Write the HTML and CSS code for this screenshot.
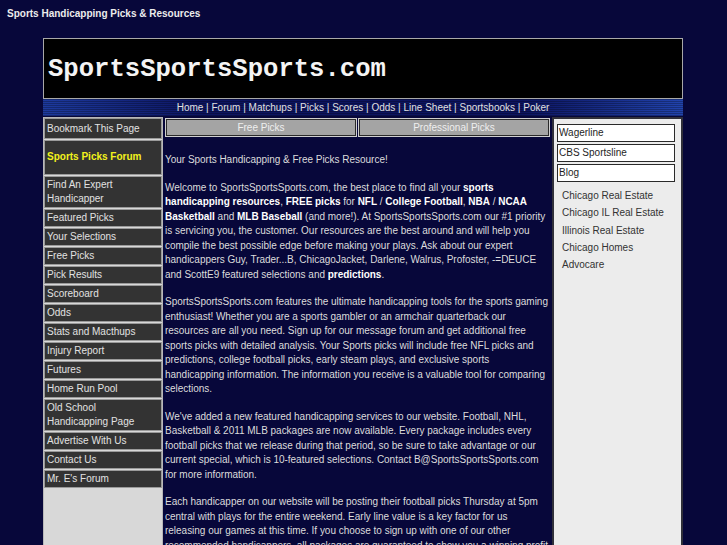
FILE: index.html
```html
<!DOCTYPE html>
<html lang="en">
<head>
<meta charset="utf-8">
<title>Sports Handicapping Picks &amp; Resources</title>
<link rel="stylesheet" href="styles.css">
</head>
<body>
<h1 class="site-tag">Sports Handicapping Picks &amp; Resources</h1>
<div class="wrap">
  <div class="masthead"><span class="logo">SportsSportsSports.com</span></div>
  <div class="topnav">
    <a href="#">Home</a> | <a href="#">Forum</a> | <a href="#">Matchups</a> | <a href="#">Picks</a> | <a href="#">Scores</a> | <a href="#">Odds</a> | <a href="#">Line Sheet</a> | <a href="#">Sportsbooks</a> | <a href="#">Poker</a>
  </div>
  <div class="cols">
    <ul class="leftnav">
      <li class="bookmark"><a href="#">Bookmark This Page</a></li>
      <li class="forum"><a href="#">Sports Picks Forum</a></li>
      <li><a href="#">Find An Expert Handicapper</a></li>
      <li><a href="#">Featured Picks</a></li>
      <li><a href="#">Your Selections</a></li>
      <li><a href="#">Free Picks</a></li>
      <li><a href="#">Pick Results</a></li>
      <li><a href="#">Scoreboard</a></li>
      <li><a href="#">Odds</a></li>
      <li><a href="#">Stats and Macthups</a></li>
      <li><a href="#">Injury Report</a></li>
      <li><a href="#">Futures</a></li>
      <li><a href="#">Home Run Pool</a></li>
      <li><a href="#">Old School Handicapping Page</a></li>
      <li><a href="#">Advertise With Us</a></li>
      <li><a href="#">Contact Us</a></li>
      <li><a href="#">Mr. E's Forum</a></li>
    </ul>
    <div class="main">
      <div class="tabs">
        <a class="tab" href="#">Free Picks</a>
        <a class="tab" href="#">Professional Picks</a>
      </div>
      <p class="lead">Your Sports Handicapping &amp; Free Picks Resource!</p>
      <p>Welcome to SportsSportsSports.com, the best place to find all your <b>sports handicapping resources</b>, <b>FREE picks</b> for <b>NFL</b> / <b>College Football</b>, <b>NBA</b> / <b>NCAA Basketball</b> and <b>MLB Baseball</b> (and more!). At SportsSportsSports.com our #1 priority is servicing you, the customer. Our resources are the best around and will help you compile the best possible edge before making your plays. Ask about our expert handicappers Guy, Trader...B, ChicagoJacket, Darlene, Walrus, Profoster, -=DEUCE and ScottE9 featured selections and <b>predictions</b>.</p>
      <p>SportsSportsSports.com features the ultimate handicapping tools for the sports gaming enthusiast! Whether you are a sports gambler or an armchair quarterback our resources are all you need. Sign up for our message forum and get additional free sports picks with detailed analysis. Your Sports picks will include free NFL picks and predictions, college football picks, early steam plays, and exclusive sports handicapping information. The information you receive is a valuable tool for comparing selections.</p>
      <p>We've added a new featured handicapping services to our website. Football, NHL, Basketball &amp; 2011 MLB packages are now available. Every package includes every football picks that we release during that period, so be sure to take advantage or our current special, which is 10-featured selections. Contact B@SportsSportsSports.com for more information.</p>
      <p>Each handicapper on our website will be posting their football picks Thursday at 5pm central with plays for the entire weekend. Early line value is a key factor for us releasing&nbsp;our games at this time. If you choose to sign up with one of our other recommended handicappers, all packages are guaranteed to show you a winning profit or you will receive additional picks free of charge.</p>
    </div>
    <div class="right">
      <a class="box" href="#">Wagerline</a>
      <a class="box" href="#">CBS Sportsline</a>
      <a class="box" href="#">Blog</a>
      <ul class="links">
        <li><a href="#">Chicago Real Estate</a></li>
        <li><a href="#">Chicago IL Real Estate</a></li>
        <li><a href="#">Illinois Real Estate</a></li>
        <li><a href="#">Chicago Homes</a></li>
        <li><a href="#">Advocare</a></li>
      </ul>
    </div>
  </div>
</div>
</body>
</html>
```
FILE: styles.css
```css
html, body {
  margin: 0;
  padding: 0;
}
body {
  background: #07073a;
  font-family: "Liberation Sans", Arial, sans-serif;
  font-size: 10px;
  color: #dcdcdc;
}
a {
  color: inherit;
  text-decoration: none;
}
.site-tag {
  margin: 0;
  padding: 8px 7px 18px;
  font-size: 10px;
  line-height: 12px;
  font-weight: bold;
  color: #ececec;
}
.wrap {
  width: 640px;
  margin: 0 0 0 43px;
}
.masthead {
  height: 59px;
  border: 1px solid #a8a8a8;
  background: #000;
  display: flex;
  align-items: center;
  padding-left: 4px;
}
.logo {
  font-family: "Liberation Mono", "Courier New", monospace;
  font-weight: bold;
  font-size: 25.6px;
  color: #f4f4f4;
  padding-top: 1px;
}
.topnav {
  height: 17px;
  line-height: 17px;
  text-align: center;
  color: #e0e0e0;
  background:
    repeating-linear-gradient(0deg, rgba(0, 0, 0, 0.28) 0 1px, transparent 1px 2px),
    linear-gradient(90deg, #1d3a9e 0%, #0c1460 25%, #0c1460 75%, #2143ad 100%);
}
.cols {
  display: flex;
  align-items: stretch;
  margin-top: 1px;
  min-height: 560px;
}
.leftnav {
  width: 118px;
  flex: none;
  margin: 0;
  padding: 0;
  list-style: none;
  border: 1px solid #b8b8b8;
  background: #d8d8d8;
}
.leftnav li {
  background: #333;
  border: 1px solid #9a9a9a;
  margin: 0 0 1px;
  padding: 1px 2px;
  line-height: 14px;
  color: #e2e2e2;
}
.leftnav li.bookmark {
  padding: 3px 2px 2px;
}
.leftnav li.forum {
  padding: 9px 2px 10px;
  color: #f2f21c;
  font-weight: bold;
}
.main {
  flex: 1;
  padding: 1px 1px 0 2px;
}
.tabs {
  display: flex;
  gap: 1px;
  margin-right: 1px;
}
.tab {
  flex: 1;
  height: 17px;
  line-height: 17px;
  border: 1px solid #cfcfcf;
  box-shadow: inset 0 0 0 1px #2a2a2a;
  background: #a4a4a4;
  color: #efefef;
  text-align: center;
}
.main p {
  margin: 13px 0 0;
  line-height: 14.5px;
  letter-spacing: -0.02px;
}
.main p.lead {
  margin-top: 16px;
}
.main b {
  color: #fff;
}
.right {
  width: 118px;
  flex: none;
  border: 2px solid #30303a;
  background: #ececec;
  padding: 5px 6px 0 3px;
}
.box {
  display: block;
  height: 16px;
  line-height: 16px;
  border: 1px solid #2a2a2a;
  background: #fff;
  color: #1e1e1e;
  padding: 0 1px;
  margin-bottom: 2px;
}
.links {
  list-style: none;
  margin: 5px 0 0;
  padding: 0 0 0 5px;
}
.links li {
  line-height: 17.3px;
  color: #333;
}
```
